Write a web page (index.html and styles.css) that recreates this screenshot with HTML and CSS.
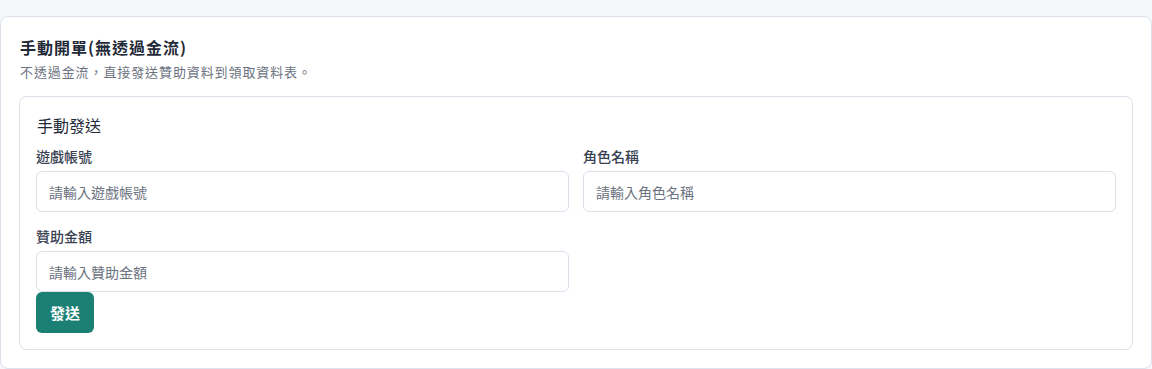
FILE: index.html
```html
<!DOCTYPE html>
<html lang="zh-Hant">
<head>
    <meta charset="UTF-8">
    <meta name="viewport" content="width=device-width, initial-scale=1.0">
    <title>手動開單</title>
    <link rel="stylesheet" href="styles.css">
</head>
<body>
    <section class="card">
        <h1 class="card-title">手動開單(無透過金流)</h1>
        <p class="card-desc">不透過金流，直接發送贊助資料到領取資料表。</p>

        <div class="panel">
            <h2 class="panel-title">手動發送</h2>
            <form class="form-grid" onsubmit="return false;">
                <div class="field">
                    <label for="account">遊戲帳號</label>
                    <input id="account" type="text" placeholder="請輸入遊戲帳號">
                </div>
                <div class="field">
                    <label for="role">角色名稱</label>
                    <input id="role" type="text" placeholder="請輸入角色名稱">
                </div>
                <div class="field">
                    <label for="amount">贊助金額</label>
                    <input id="amount" type="text" placeholder="請輸入贊助金額">
                </div>
                <div class="actions">
                    <button class="button" type="submit">發送</button>
                </div>
            </form>
        </div>
    </section>
</body>
</html>
```

FILE: styles.css
```css
body {
    font-family: "Noto Sans CJK TC", "Noto Sans", sans-serif;
    margin: 0;
    padding: 16px 0 0;
    background-color: #f5f6fa;
    color: #1f2937;
}
.card {
    background-color: #fff;
    border: 1px solid #dbe2ec;
    border-radius: 8px;
    padding: 18px;
}
.card-title {
    font-size: 16px;
    line-height: 24px;
    font-weight: 700;
    letter-spacing: 1px;
    margin: 0 0 0 1px;
    color: #1f2937;
}
.card-desc {
    font-size: 13px;
    line-height: 18px;
    letter-spacing: 0.9px;
    color: #6b7280;
    margin: 4px 0 15px 1px;
}
.panel {
    border: 1px solid #dbe2ec;
    border-radius: 8px;
    padding: 16px;
}
.panel-title {
    font-size: 16px;
    line-height: 24px;
    font-weight: 400;
    margin: 0 0 9px 1px;
    color: #1f2937;
}
.form-grid {
    display: grid;
    grid-template-columns: 1fr 1fr;
    column-gap: 14px;
    row-gap: 14px;
}
.field {
    display: flex;
    flex-direction: column;
}
.field label {
    font-size: 14px;
    line-height: 20px;
    font-weight: 500;
    color: #374151;
    margin-bottom: 5px;
}
.field input {
    font-family: inherit;
    font-size: 14px;
    height: 41px;
    box-sizing: border-box;
    padding: 0 12px;
    border: 1px solid #d9e0ea;
    border-radius: 6px;
    color: #1f2937;
    outline: none;
}
.field input::placeholder {
    color: #6b7280;
}
.actions {
    grid-column: 1 / -1;
    margin-top: -14px;
}
.button {
    font-family: inherit;
    background-color: #1b7f74;
    color: #fff;
    font-size: 15px;
    font-weight: 700;
    height: 41px;
    padding: 0 14px;
    border: none;
    border-radius: 6px;
    cursor: pointer;
}
.button:hover {
    background-color: #166c62;
}
```
